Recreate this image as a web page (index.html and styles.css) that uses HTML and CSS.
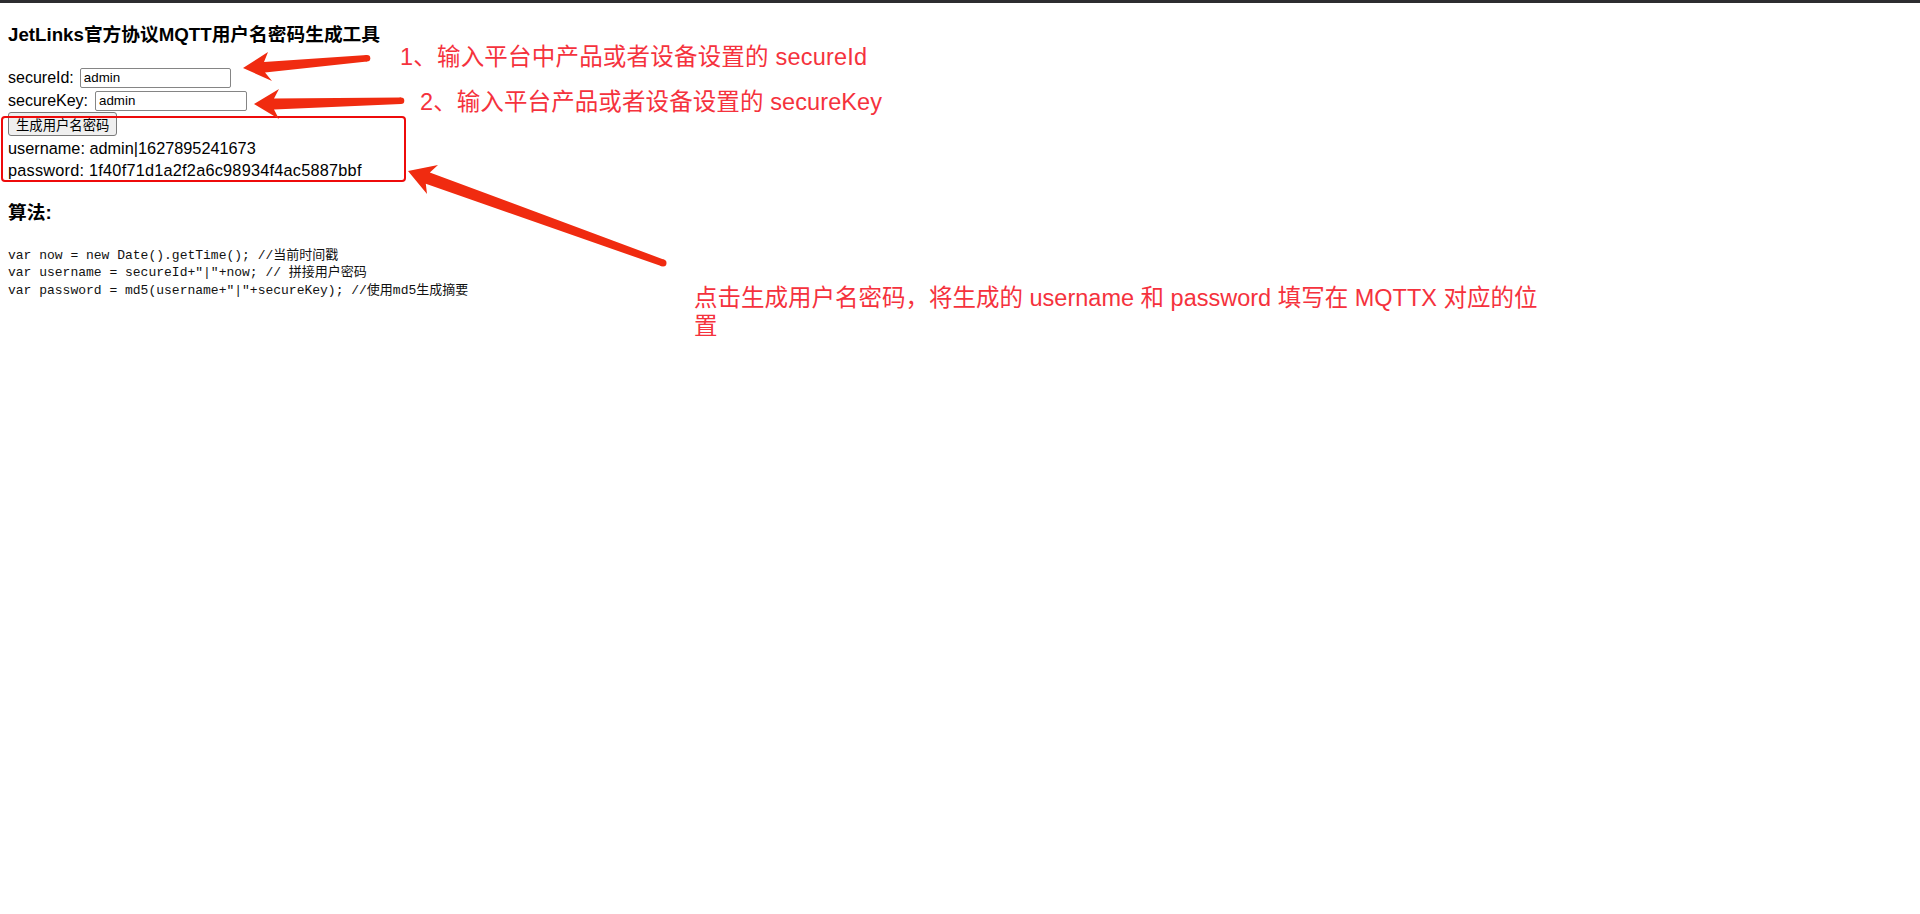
FILE: index.html
```html
<!DOCTYPE html>
<html lang="zh-CN">
<head>
<meta charset="utf-8">
<title>JetLinks官方协议MQTT用户名密码生成工具</title>
<link rel="stylesheet" href="styles.css">
</head>
<body>
<div class="screen">
  <div class="topbar"></div>
  <main class="page">
    <h3 class="title">JetLinks官方协议MQTT用户名密码生成工具</h3>
    <div class="field"><label class="label">secureId:</label><input class="input" type="text" value="admin"></div>
    <div class="field"><label class="label">secureKey:</label><input class="input input-key" type="text" value="admin"></div>
    <button class="btn" type="button">生成用户名密码</button>
    <div class="result">username: admin|1627895241673</div>
    <div class="result result-pw">password: 1f40f71d1a2f2a6c98934f4ac5887bbf</div>
    <h3 class="algo">算法:</h3>
<pre class="code">var now = new Date().getTime(); //当前时间戳
var username = secureId+"|"+now; // 拼接用户密码
var password = md5(username+"|"+secureKey); //使用md5生成摘要</pre>
  </main>

  <div class="annot">
    <div class="redbox"></div>
    <svg class="arrows" width="1920" height="914" viewBox="0 0 1920 914">
      <polygon points="243,68 268,52 264,62 367,55 367,61.5 265,72.5 272,81"/>
      <circle cx="367" cy="58.2" r="3.3"/>
      <polygon points="254,104 279,89 274,98.5 401,97.5 401,104 274,109.5 279,119"/>
      <circle cx="401" cy="100.8" r="3.3"/>
      <polygon points="408,171 438,165 429.8,172.5 664.2,259.7 661.8,266.3 425.8,183.7 427,194"/>
      <circle cx="663" cy="263" r="3.5"/>
    </svg>
    <div class="note note1">1、输入平台中产品或者设备设置的 secureId</div>
    <div class="note note2">2、输入平台产品或者设备设置的 secureKey</div>
    <div class="note note3">点击生成用户名密码，将生成的 username 和 password 填写在 MQTTX 对应的位<br>置</div>
  </div>
</div>
</body>
</html>
```

FILE: styles.css
```css
html, body {
  margin: 0;
  padding: 0;
  background: #ffffff;
}

.screen {
  position: relative;
  width: 1920px;
  height: 914px;
  overflow: hidden;
  font-family: "Liberation Sans", "Noto Sans CJK SC", sans-serif;
  color: #000;
}

.topbar {
  height: 3px;
  background: #2d2d30;
}

.page {
  padding: 0 8px;
}

.title {
  margin: 21px 0 20px;
  font-size: 18.72px;
  line-height: 22px;
  font-weight: bold;
}

.field {
  display: flex;
  align-items: center;
  height: 23px;
}

.label {
  font-size: 16px;
  line-height: 18px;
}

.input {
  box-sizing: border-box;
  width: 151px;
  height: 20px;
  margin: 0 0 0 6px;
  padding: 0 3px;
  border: 1px solid #858585;
  border-radius: 2px;
  background: #fff;
  font-family: "Liberation Sans", "Noto Sans CJK SC", sans-serif;
  font-size: 13.33px;
  color: #000;
  outline: none;
}

.input-key {
  width: 152px;
  margin-left: 7px;
}

.btn {
  display: block;
  box-sizing: border-box;
  height: 24px;
  margin: 0 0 1px;
  padding: 0 7px;
  border: 1px solid #7a7a7a;
  border-radius: 3px;
  background: #efefef;
  font-family: "Liberation Sans", "Noto Sans CJK SC", sans-serif;
  font-size: 13.33px;
  color: #000;
}

.result {
  font-size: 16.3px;
  line-height: 22px;
}

.result-pw {
  letter-spacing: 0.23px;
}

.algo {
  margin: 20.5px 0 0;
  font-size: 18.72px;
  line-height: 22px;
  font-weight: bold;
}

.code {
  margin: 23px 0 0;
  font-family: "Liberation Mono", "Noto Sans CJK SC", monospace;
  font-size: 13px;
  line-height: 17.6px;
  color: #111;
}

.annot {
  position: absolute;
  left: 0;
  top: 0;
  width: 1920px;
  height: 914px;
  pointer-events: none;
}

.redbox {
  position: absolute;
  left: 1px;
  top: 116px;
  width: 405px;
  height: 66px;
  box-sizing: border-box;
  border: 2px solid #ee0b0b;
  border-radius: 4px;
}

.arrows {
  position: absolute;
  left: 0;
  top: 0;
  fill: #f02b10;
}

.note {
  position: absolute;
  font-size: 23.5px;
  line-height: 28px;
  color: #f5323d;
  white-space: nowrap;
}

.note1 {
  left: 400px;
  top: 43px;
  letter-spacing: 0.2px;
}

.note2 {
  left: 420px;
  top: 88px;
  letter-spacing: 0.1px;
}

.note3 {
  left: 694px;
  top: 284px;
}
```
